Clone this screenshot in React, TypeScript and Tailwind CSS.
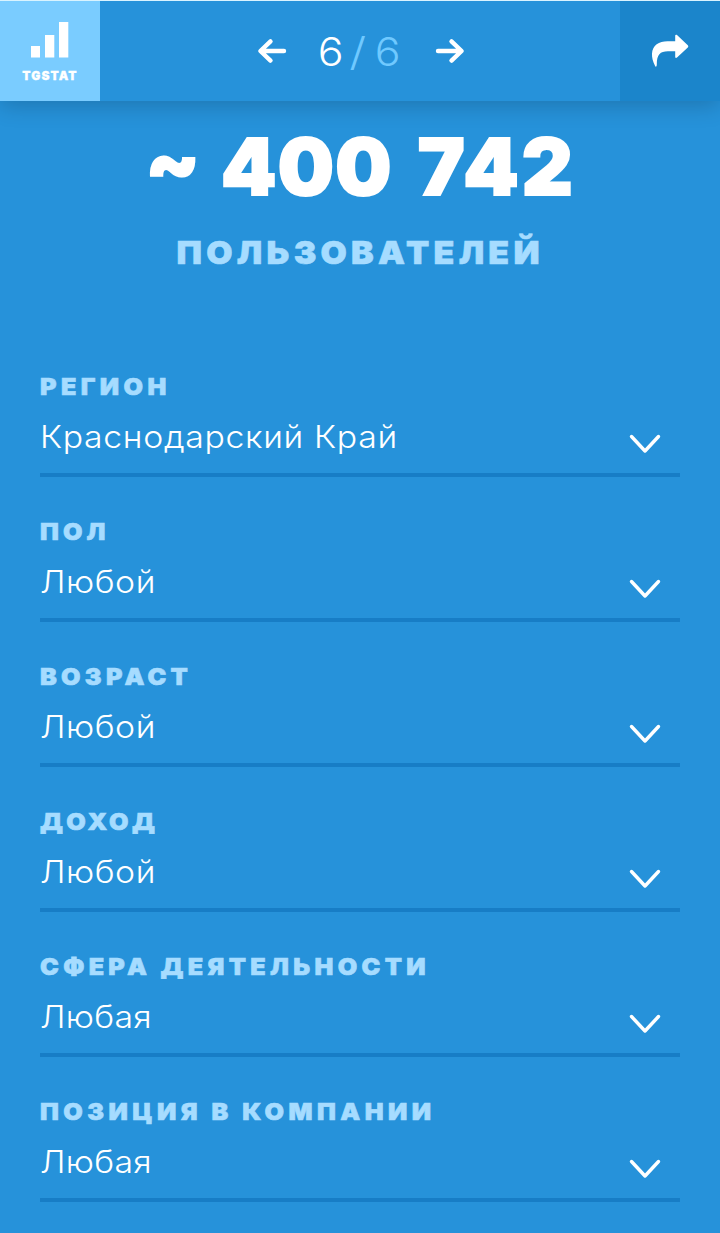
import { clsx } from "clsx";

const fields = [
  { label: "Регион", value: "Краснодарский Край", labelClass: "tracking-[4.1px]", valueClass: "tracking-[0.6px]" },
  { label: "Пол", value: "Любой", labelClass: "tracking-[3.8px]", valueClass: "tracking-[0.5px]" },
  { label: "Возраст", value: "Любой", labelClass: "tracking-[4px]", valueClass: "tracking-[0.5px]" },
  { label: "Доход", value: "Любой", labelClass: "tracking-[3.2px]", valueClass: "tracking-[0.5px]" },
  { label: "Сфера деятельности", value: "Любая", labelClass: "tracking-[4.05px]", valueClass: "tracking-[0.3px]" },
  { label: "Позиция в компании", value: "Любая", labelClass: "tracking-[4.15px]", valueClass: "tracking-[0.3px]" },
];

const Logo = () => (
  <a className="flex w-[100px] flex-col items-center bg-[#7accff] pt-[21px]">
    <svg width="38" height="36" viewBox="0 0 38 36" fill="white">
      <rect x="-0.5" y="24" width="9.5" height="11.5" />
      <rect x="14" y="13" width="9.3" height="22.5" />
      <rect x="28" y="0" width="9.3" height="35.5" />
    </svg>
    <span className="mt-[10px] text-[12px] leading-[15px] font-black tracking-[1.1px] text-white [-webkit-text-stroke:0.3px_white]">TGSTAT</span>
  </a>
);

const Header = () => (
  <header className="flex h-[101px] border-t border-[#d9f3ff] bg-[#2692da] shadow-[0_4px_22px_rgba(0,0,0,0.2)]">
    <Logo />
    <nav className="flex flex-1 items-center justify-center pl-[2px] text-white">
      <svg className="shrink-0" width="30" height="26" viewBox="0 0 30 26" fill="none" stroke="white" strokeWidth="4.4" strokeLinecap="round" strokeLinejoin="round">
        <path d="M27 13H4M13.5 3.4L3.4 13L13.5 22.6" />
      </svg>
      <div className="flex w-[148px] items-center justify-center pt-[2px] pr-[4px] text-[39px] leading-[48px] font-light">
        <span className="scale-x-110">6</span>
        <span className="mr-[11px] ml-[9px] scale-x-125 text-[#6fc9ff]">/</span>
        <span className="scale-x-110 text-[#6fc9ff]">6</span>
      </div>
      <svg className="shrink-0" width="30" height="26" viewBox="0 0 30 26" fill="none" stroke="white" strokeWidth="4.4" strokeLinecap="round" strokeLinejoin="round">
        <path d="M3 13H26M16.5 3.4L26.6 13L16.5 22.6" />
      </svg>
    </nav>
    <button className="flex w-[100px] items-center justify-center bg-[#1b85cb]">
      <svg width="38" height="34" viewBox="0 0 38 34" fill="white">
        <path d="M24.2 1.6C24.2.7 25.2.5 26 1.1L36.8 11.2Q37.9 12.3 36.8 13.4L26 23.5C25.2 24.2 24.2 23.9 24.2 23V17.2H17C9 17.2 5.8 20.5 5.8 30.5C5.7 33 4.6 33.3 4 31.8C1.8 27.2.8 23.5 1 19.5C1.4 11.5 8 7.3 16.5 7.3H24.2Z" />
      </svg>
    </button>
  </header>
);

const App = () => {
  return (
    <div className="h-[1233px] w-[720px] overflow-hidden bg-[#2692da] font-['Inter','Liberation_Sans',sans-serif]">
      <Header />

      {/* Audience size */}
      <section className="flex flex-col items-center">
        <div className="mt-[25px] flex h-[80px] items-center pl-[1px] text-[79px] leading-[80px] font-black text-white [-webkit-text-stroke:2px_white]">
          <span className="pb-[10px]">~</span>
          <span className="ml-[21px] tracking-[1.3px]">400</span>
          <span className="ml-[25px] tracking-[3px]">742</span>
        </div>
        <div className="mt-[27px] scale-x-[1.06] text-[32px] leading-[40px] font-black tracking-[4px] text-[#a6dcff] uppercase [-webkit-text-stroke:0.6px_#a6dcff]">
          Пользователей
        </div>
      </section>

      {/* Filters */}
      <form className="mt-[100px] flex flex-col gap-[41px] px-10">
        {fields.map((field) => (
          <div key={field.label} className="h-[104px] border-b-4 border-[#177dc6]">
            <label className={clsx("block origin-left scale-x-[1.07] text-[23.5px] leading-[28px] font-black whitespace-nowrap text-[#a6dcff] uppercase [-webkit-text-stroke:0.6px_#a6dcff]", field.labelClass)}>
              {field.label}
            </label>
            <div className="mt-[15px] flex h-[42px] items-center justify-between pr-[18px]">
              <span className={clsx("origin-left scale-x-[1.09] text-[31px] leading-[42px] font-light whitespace-nowrap text-white", field.valueClass)}>
                {field.value}
              </span>
              <svg className="mt-[14px]" width="34" height="22" viewBox="0 0 34 22" fill="none" stroke="white" strokeWidth="3.4" strokeLinecap="round" strokeLinejoin="round">
                <path d="M3.5 3.5L17 18L30.5 3.5" />
              </svg>
            </div>
          </div>
        ))}
      </form>
    </div>
  );
};

export default App;
